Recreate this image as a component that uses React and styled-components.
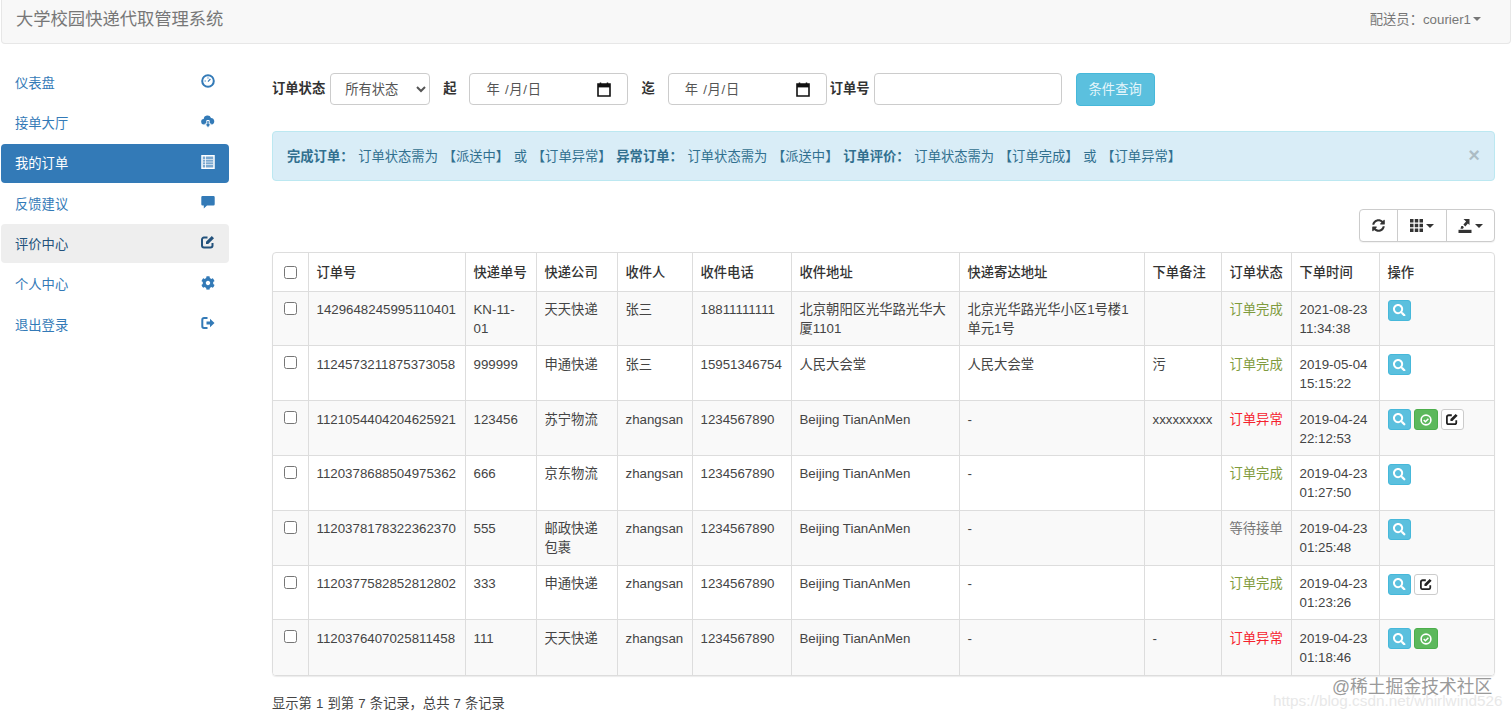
import React from "react";
import styled, { createGlobalStyle } from "styled-components";
import { FaCog, FaSearch, FaSyncAlt } from "react-icons/fa";

const FONT = `"Liberation Sans", "Noto Sans CJK SC", sans-serif`;

const GlobalStyle = createGlobalStyle`
  * { box-sizing: border-box; }
  html, body { margin: 0; padding: 0; background: #fff; }
  body {
    font-family: ${FONT};
    font-size: 13.3px;
    line-height: 19px;
    color: #444;
    overflow: hidden;
  }
`;

/* glyphicon style drawings */
const DashIcon = () => (
  <svg width="14" height="14" viewBox="0 0 14 14">
    <circle cx="7" cy="7" r="5.8" fill="none" stroke="currentColor" strokeWidth="2" />
    <path d="M7 7.600 9.400 5" stroke="currentColor" strokeWidth="1.200" />
    <path d="M3.600 7h1.200M7 3.400v1.200" stroke="currentColor" strokeWidth="1" />
  </svg>
);
const CloudIcon = () => (
  <svg width="14" height="14" viewBox="0 0 14 14">
    <path d="M3 10.500A2.700 2.700 0 0 1 2.700 5.100 3.800 3.800 0 0 1 10 3.900 3.400 3.400 0 0 1 11 10.500z" fill="currentColor" />
    <path d="M5.800 6.500h2.400v3.500h2L7 13.800 3.800 10h2z" fill="currentColor" stroke="#fff" strokeWidth="1" />
  </svg>
);
const ListIcon = () => (
  <svg width="14" height="14" viewBox="0 0 14 14">
    <path d="M1 .8h12v12.400H1z" fill="currentColor" fillOpacity=".35" stroke="currentColor" strokeWidth="1.500" />
    <path d="M4.500 1v12" stroke="currentColor" strokeWidth="1" opacity=".8" />
    <path d="M2 4.500h10M2 7h10M2 9.500h10" stroke="currentColor" strokeWidth="1" opacity=".6" />
  </svg>
);
const CommentIcon = () => (
  <svg width="14" height="14" viewBox="0 0 14 14">
    <path d="M1.500 1h11a1.200 1.200 0 0 1 1.200 1.200v7.100a1.200 1.200 0 0 1-1.200 1.200H6L2.800 13.400v-2.900H1.500A1.200 1.200 0 0 1 .3 9.300V2.200A1.200 1.200 0 0 1 1.500 1z" fill="currentColor" />
  </svg>
);
const EditIcon = () => (
  <svg width="1em" height="1em" viewBox="0 0 14 14">
    <path d="M11.500 8v2.500a2 2 0 0 1-2 2H3a2 2 0 0 1-2-2V4.500a2 2 0 0 1 2-2h3.500" fill="none" stroke="currentColor" strokeWidth="2" />
    <path d="M5 6.800 10.800 1l2.200 2.200L7.200 9H5z" fill="currentColor" />
  </svg>
);
const LogoutIcon = () => (
  <svg width="14" height="14" viewBox="0 0 14 14">
    <path d="M6.500 2H3A1.700 1.700 0 0 0 1.300 3.700v6.600A1.700 1.700 0 0 0 3 12h3.500" fill="none" stroke="currentColor" strokeWidth="2" />
    <path d="M5.500 5.500H9V2.800L13.500 7 9 11.200V8.500H5.500z" fill="currentColor" />
  </svg>
);
const OkIcon = () => (
  <svg width="12" height="12" viewBox="0 0 12 12">
    <circle cx="6" cy="6" r="4.900" fill="none" stroke="currentColor" strokeWidth="1.600" />
    <path d="M3.700 6l1.700 1.700 3-3" fill="none" stroke="currentColor" strokeWidth="1.500" />
  </svg>
);
const GridIcon = () => (
  <svg width="13" height="13" viewBox="0 0 13 13">
    <path d="M0 0h3.500v3.500H0zM4.750 0h3.500v3.500h-3.500zM9.500 0H13v3.500H9.500zM0 4.750h3.500v3.500H0zM4.750 4.750h3.500v3.500h-3.500zM9.500 4.750H13v3.500H9.500zM0 9.500h3.500V13H0zM4.750 9.500h3.500V13h-3.500zM9.500 9.500H13V13H9.500z" fill="currentColor" />
  </svg>
);
const ExportIcon = () => (
  <svg width="14" height="14" viewBox="0 0 14 14">
    <path d="M.5 10.800h13V14H.5z" fill="currentColor" />
    <path d="M2.500 9.800 3.300 7h1.500l1 1.200-.8 1.600z" fill="currentColor" />
    <path d="M5.500 0h6v6L9.900 4.400 7.300 7.500 5.400 5.600l2.700-3z" fill="currentColor" />
  </svg>
);
const CalendarIcon = () => (
  <svg width="14" height="15" viewBox="0 0 14 15">
    <path d="M1 2h12v12H1z" fill="none" stroke="#111" strokeWidth="1.600" />
    <path d="M1 2h12v3.400H1z" fill="#111" />
    <path d="M3.500 .5v2M10.500 .5v2" stroke="#111" strokeWidth="1.500" />
  </svg>
);

const Page = styled.div`
  width: 1512px;
  height: 718px;
  position: relative;
  overflow: hidden;
`;

const Navbar = styled.header`
  height: 44px;
  margin: 0 1px;
  padding: 9px 29px 0 14px;
  display: flex;
  justify-content: space-between;
  background: #f8f8f8;
  border: 1px solid #e7e7e7;
  border-top: 0;
  border-radius: 0 0 4px 4px;
  color: #777;
`;

const Brand = styled.div`
  font-size: 17.3px;
  line-height: 20px;
`;

const UserMenu = styled.div`
  display: flex;
  align-items: center;
  height: 20px;
  gap: 2px;
  font-size: 13.3px;
`;

const Caret = styled.span`
  display: inline-block;
  width: 0;
  height: 0;
  margin-left: ${(p) => p.$gap || 0}px;
  border-top: 4px solid ${(p) => p.$color || "#777"};
  border-left: 4px solid transparent;
  border-right: 4px solid transparent;
`;

const Layout = styled.div`
  display: flex;
`;

const Sidebar = styled.nav`
  width: 228px;
  margin-left: 1px;
  padding-top: 19px;
  display: flex;
  flex-direction: column;
  gap: 1.350px;
  flex: none;
`;

const NavItem = styled.a`
  height: 39px;
  padding: 1px 14px 0 14px;
  display: flex;
  align-items: center;
  justify-content: space-between;
  border-radius: 4px;
  color: ${(p) => (p.$active ? "#fff" : p.$hover ? "#23527c" : "#337ab7")};
  background: ${(p) => (p.$active ? "#337ab7" : p.$hover ? "#eee" : "transparent")};
`;

const NavIcon = styled.span`
  width: 14px;
  height: 14px;
  display: flex;
  position: relative;
  top: -2px;
  font-size: 14px;
`;

const Main = styled.main`
  width: 1223px;
  margin-left: 43px;
  padding-top: 29px;
`;

const FilterForm = styled.form`
  display: flex;
  align-items: center;
  height: 32px;
`;

const FilterLabel = styled.label`
  font-weight: 700;
  color: #333;
  margin-left: ${(p) => p.$left || 0}px;
  margin-right: ${(p) => p.$right || 5}px;
  position: relative;
  top: -1px;
`;

const Select = styled.select`
  width: 100px;
  height: 32px;
  padding: 0 10px;
  font: inherit;
  color: #555;
  background: #fff;
  border: 1px solid #ccc;
  border-radius: 4px;
`;

const DateField = styled.div`
  width: 159px;
  height: 32px;
  padding: 0 16px 0 16px;
  display: flex;
  align-items: center;
  justify-content: space-between;
  color: #555;
  letter-spacing: 0.7px;
  background: #fff;
  border: 1px solid #ccc;
  border-radius: 4px;
`;

const TextInput = styled.input`
  width: 188px;
  height: 32px;
  padding: 0 12px;
  font: inherit;
  background: #fff;
  border: 1px solid #ccc;
  border-radius: 4px;
`;

const QueryButton = styled.button`
  width: 79px;
  height: 33px;
  margin-left: 14px;
  font: inherit;
  color: #e6f6fb;
  background: #5bc0de;
  border: 1px solid #46b8da;
  border-radius: 4px;
`;

const Alert = styled.div`
  height: 50px;
  margin-top: 26px;
  padding: 0 14px;
  display: flex;
  align-items: center;
  justify-content: space-between;
  color: #31708f;
  background: #d9edf7;
  border: 1px solid #bce8f1;
  border-radius: 4px;
  white-space: pre;
  word-spacing: 1px;
`;

const CloseMark = styled.span`
  font-size: 20px;
  font-weight: 700;
  line-height: 20px;
  color: #000;
  opacity: 0.2;
  margin-right: 0;
  position: relative;
  top: -1px;
`;

const Toolbar = styled.div`
  margin-top: 28px;
  display: flex;
  justify-content: flex-end;
`;

const ToolGroup = styled.div`
  display: flex;
  height: 33px;
  background: #fff;
  border: 1px solid #ccc;
  border-radius: 4px;
  box-shadow: 0 1px 1px rgba(0, 0, 0, 0.05);
`;

const ToolButton = styled.button`
  width: ${(p) => p.$width}px;
  display: flex;
  align-items: center;
  justify-content: center;
  padding: 0;
  color: #333;
  background: transparent;
  border: 0;
  border-left: ${(p) => (p.$first ? 0 : "1px solid #ccc")};
  font-size: 13px;
`;

const TableWrap = styled.div`
  margin-top: 10px;
  border: 1px solid #ddd;
  border-radius: 4px;
  overflow: hidden;
  box-shadow: 0 1px 1px rgba(0, 0, 0, 0.08);
`;

const Table = styled.table`
  width: 100%;
  table-layout: fixed;
  border-collapse: collapse;
`;

const Col = styled.col`
  width: ${(p) => p.$w}px;
`;

const HeadCell = styled.th`
  height: 38px;
  padding: 1px 8px 0;
  text-align: left;
  font-weight: 500;
  color: #333;
  white-space: nowrap;
  border-left: 1px solid #ddd;
  border-bottom: 1px solid #ddd;
  &:first-child { border-left: 0; }
`;

const Row = styled.tr`
  background: ${(p) => (p.$striped ? "#f9f9f9" : "#fff")};
`;

const Cell = styled.td`
  height: 54.800px;
  padding: 9.500px 8px 6.500px;
  line-height: 18.900px;
  vertical-align: top;
  color: ${(p) => p.$color || "#444"};
  white-space: ${(p) => (p.$nowrap ? "nowrap" : "normal")};
  word-break: break-word;
  border-left: 1px solid #ddd;
  border-top: 1px solid #ddd;
  &:first-child { border-left: 0; }
`;

const Check = styled.input.attrs({ type: "checkbox" })`
  display: block;
  width: 13px;
  height: 13px;
  margin: ${(p) => (p.$head ? "0" : "0.5px")} auto 0;
`;

const Actions = styled.div`
  display: flex;
  gap: 3px;
  margin-top: -1.500px;
`;

const ActionButton = styled.button`
  width: 23.500px;
  height: 21px;
  padding: 0;
  display: flex;
  align-items: center;
  justify-content: center;
  font-size: 12.500px;
  border-radius: 3px;
  color: ${(p) => (p.$kind === "edit" ? "#222" : "#fff")};
  background: ${(p) => ({ view: "#5bc0de", done: "#5cb85c", edit: "#fff" }[p.$kind])};
  border: 1px solid ${(p) => ({ view: "#46b8da", done: "#4cae4c", edit: "#ccc" }[p.$kind])};
`;

const Summary = styled.div`
  margin-top: 18px;
  word-spacing: 0.4px;
`;

const WatermarkCn = styled.div`
  position: absolute;
  left: 1332px;
  top: 677px;
  font-size: 17.800px;
  line-height: 20px;
  color: #9a9a9a;
  white-space: nowrap;
`;

const WatermarkUrl = styled.div`
  position: absolute;
  left: 1273px;
  top: 692px;
  font-size: 15.300px;
  line-height: 17px;
  color: #e8e8e8;
  white-space: nowrap;
`;

const navItems = [
  { label: "仪表盘", icon: <DashIcon /> },
  { label: "接单大厅", icon: <CloudIcon /> },
  { label: "我的订单", icon: <ListIcon />, active: true },
  { label: "反馈建议", icon: <CommentIcon /> },
  { label: "评价中心", icon: <EditIcon />, hover: true },
  { label: "个人中心", icon: <FaCog /> },
  { label: "退出登录", icon: <LogoutIcon /> },
];

const columns = [
  { w: 35 },
  { w: 157, title: "订单号" },
  { w: 71, title: "快递单号" },
  { w: 81, title: "快递公司" },
  { w: 75, title: "收件人" },
  { w: 99, title: "收件电话" },
  { w: 168, title: "收件地址" },
  { w: 185, title: "快递寄达地址" },
  { w: 77, title: "下单备注" },
  { w: 70, title: "订单状态" },
  { w: 88, title: "下单时间" },
  { w: 115, title: "操作" },
];

const DONE = "#7f9b3d";
const FAIL = "#f5222d";
const WAIT = "#777";

const orders = [
  { id: "1429648245995110401", no: "KN-11-01", co: "天天快递", name: "张三", tel: "18811111111", addr: "北京朝阳区光华路光华大厦1101", to: "北京光华路光华小区1号楼1单元1号", note: "", status: "订单完成", color: DONE, time: ["2021-08-23", "11:34:38"], ops: ["view"] },
  { id: "1124573211875373058", no: "999999", co: "申通快递", name: "张三", tel: "15951346754", addr: "人民大会堂", to: "人民大会堂", note: "污", status: "订单完成", color: DONE, time: ["2019-05-04", "15:15:22"], ops: ["view"] },
  { id: "1121054404204625921", no: "123456", co: "苏宁物流", name: "zhangsan", tel: "1234567890", addr: "Beijing TianAnMen", to: "-", note: "xxxxxxxxx", status: "订单异常", color: FAIL, time: ["2019-04-24", "22:12:53"], ops: ["view", "done", "edit"] },
  { id: "1120378688504975362", no: "666", co: "京东物流", name: "zhangsan", tel: "1234567890", addr: "Beijing TianAnMen", to: "-", note: "", status: "订单完成", color: DONE, time: ["2019-04-23", "01:27:50"], ops: ["view"] },
  { id: "1120378178322362370", no: "555", co: "邮政快递包裹", name: "zhangsan", tel: "1234567890", addr: "Beijing TianAnMen", to: "-", note: "", status: "等待接单", color: WAIT, time: ["2019-04-23", "01:25:48"], ops: ["view"] },
  { id: "1120377582852812802", no: "333", co: "申通快递", name: "zhangsan", tel: "1234567890", addr: "Beijing TianAnMen", to: "-", note: "", status: "订单完成", color: DONE, time: ["2019-04-23", "01:23:26"], ops: ["view", "edit"] },
  { id: "1120376407025811458", no: "111", co: "天天快递", name: "zhangsan", tel: "1234567890", addr: "Beijing TianAnMen", to: "-", note: "-", status: "订单异常", color: FAIL, time: ["2019-04-23", "01:18:46"], ops: ["view", "done"] },
];

const opIcons = { view: <FaSearch />, done: <OkIcon />, edit: <EditIcon /> };

export default function App() {
  return (
    <Page>
      <GlobalStyle />
      <Navbar>
        <Brand>大学校园快递代取管理系统</Brand>
        <UserMenu>
          配送员：courier1
          <Caret />
        </UserMenu>
      </Navbar>
      <Layout>
        <Sidebar>
          {navItems.map((item) => (
            <NavItem key={item.label} $active={item.active} $hover={item.hover}>
              {item.label}
              <NavIcon>{item.icon}</NavIcon>
            </NavItem>
          ))}
        </Sidebar>
        <Main>
          <FilterForm>
            <FilterLabel>订单状态</FilterLabel>
            <Select defaultValue="all">
              <option value="all">所有状态</option>
            </Select>
            <FilterLabel $left={13} $right={13}>起</FilterLabel>
            <DateField>
              年 /月/日
              <CalendarIcon />
            </DateField>
            <FilterLabel $left={13} $right={13}>迄</FilterLabel>
            <DateField>
              年 /月/日
              <CalendarIcon />
            </DateField>
            <FilterLabel $left={3} $right={4}>订单号</FilterLabel>
            <TextInput />
            <QueryButton type="button">条件查询</QueryButton>
          </FilterForm>
          <Alert>
            <span>
              <b>完成订单：</b> 订单状态需为 【派送中】 或 【订单异常】 <b>异常订单：</b> 订单状态需为 【派送中】 <b>订单评价：</b> 订单状态需为 【订单完成】 或 【订单异常】
            </span>
            <CloseMark>×</CloseMark>
          </Alert>
          <Toolbar>
            <ToolGroup>
              <ToolButton $first $width={37}><FaSyncAlt /></ToolButton>
              <ToolButton $width={49}><GridIcon /><Caret $gap={3} $color="#333" /></ToolButton>
              <ToolButton $width={48}><ExportIcon /><Caret $gap={3} $color="#333" /></ToolButton>
            </ToolGroup>
          </Toolbar>
          <TableWrap>
            <Table>
              <colgroup>
                {columns.map((c, i) => <Col key={i} $w={c.w} />)}
              </colgroup>
              <thead>
                <tr>
                  {columns.map((c, i) => (
                    <HeadCell key={i}>{c.title || <Check $head />}</HeadCell>
                  ))}
                </tr>
              </thead>
              <tbody>
                {orders.map((o, i) => (
                  <Row key={o.id} $striped={i % 2 === 0}>
                    <Cell><Check /></Cell>
                    <Cell>{o.id}</Cell>
                    <Cell>{o.no}</Cell>
                    <Cell>{o.co}</Cell>
                    <Cell>{o.name}</Cell>
                    <Cell>{o.tel}</Cell>
                    <Cell>{o.addr}</Cell>
                    <Cell>{o.to}</Cell>
                    <Cell>{o.note}</Cell>
                    <Cell $color={o.color} $nowrap>{o.status}</Cell>
                    <Cell>{o.time[0]}<br />{o.time[1]}</Cell>
                    <Cell>
                      <Actions>
                        {o.ops.map((k) => <ActionButton key={k} $kind={k}>{opIcons[k]}</ActionButton>)}
                      </Actions>
                    </Cell>
                  </Row>
                ))}
              </tbody>
            </Table>
          </TableWrap>
          <Summary>显示第 1 到第 7 条记录，总共 7 条记录</Summary>
        </Main>
      </Layout>
      <WatermarkUrl>https://blog.csdn.net/whirlwind526</WatermarkUrl>
      <WatermarkCn>@稀土掘金技术社区</WatermarkCn>
    </Page>
  );
}
